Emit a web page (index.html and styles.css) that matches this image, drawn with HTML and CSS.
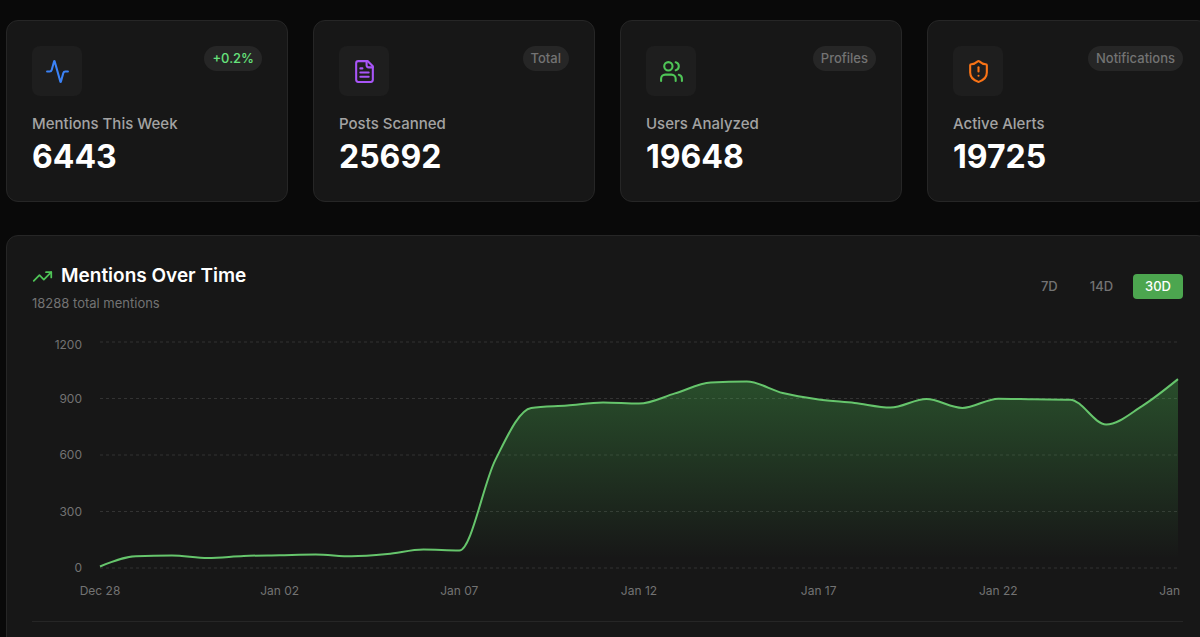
FILE: index.html
```
<!DOCTYPE html>
<html lang="en">
<head>
    <meta charset="UTF-8">
    <meta name="viewport" content="width=device-width, initial-scale=1.0">
    <title>Mentions Dashboard</title>
    <link rel="stylesheet" href="styles.css">
</head>
<body>
    <main class="dashboard">
        <section class="stats">
            <div class="stat-card">
                <div class="stat-top">
                    <div class="stat-icon blue">
                        <svg class="icon" viewBox="0 0 24 24"><path d="M22 12h-2.48a2 2 0 0 0-1.93 1.46l-2.35 8.36a.25.25 0 0 1-.48 0L9.24 2.18a.25.25 0 0 0-.48 0l-2.35 8.36A2 2 0 0 1 4.49 12H2"/></svg>
                    </div>
                    <span class="badge badge-up">+0.2%</span>
                </div>
                <div class="stat-label">Mentions This Week</div>
                <div class="stat-number">6443</div>
            </div>
            <div class="stat-card">
                <div class="stat-top">
                    <div class="stat-icon purple">
                        <svg class="icon" viewBox="0 0 24 24"><path d="M15 2H6a2 2 0 0 0-2 2v16a2 2 0 0 0 2 2h12a2 2 0 0 0 2-2V7Z"/><path d="M14 2v4a2 2 0 0 0 2 2h4"/><path d="M10 9H8"/><path d="M16 13H8"/><path d="M16 17H8"/></svg>
                    </div>
                    <span class="badge">Total</span>
                </div>
                <div class="stat-label">Posts Scanned</div>
                <div class="stat-number">25692</div>
            </div>
            <div class="stat-card">
                <div class="stat-top">
                    <div class="stat-icon green">
                        <svg class="icon" viewBox="0 0 24 24"><path d="M16 21v-2a4 4 0 0 0-4-4H6a4 4 0 0 0-4 4v2"/><circle cx="9" cy="7" r="4"/><path d="M22 21v-2a4 4 0 0 0-3-3.87"/><path d="M16 3.13a4 4 0 0 1 0 7.75"/></svg>
                    </div>
                    <span class="badge">Profiles</span>
                </div>
                <div class="stat-label">Users Analyzed</div>
                <div class="stat-number">19648</div>
            </div>
            <div class="stat-card">
                <div class="stat-top">
                    <div class="stat-icon orange">
                        <svg class="icon" viewBox="0 0 24 24"><path d="M20 13c0 5-3.5 7.5-7.66 8.95a1 1 0 0 1-.67-.01C7.5 20.5 4 18 4 13V6a1 1 0 0 1 1-1c2 0 4.5-1.2 6.24-2.72a1.17 1.17 0 0 1 1.52 0C14.51 3.81 17 5 19 5a1 1 0 0 1 1 1z"/><path d="M12 8v4"/><path d="M12 16h.01"/></svg>
                    </div>
                    <span class="badge">Notifications</span>
                </div>
                <div class="stat-label">Active Alerts</div>
                <div class="stat-number">19725</div>
            </div>
        </section>

        <section class="panel">
            <div class="panel-header">
                <div>
                    <h2 class="panel-title">
                        <svg class="icon title-icon" viewBox="0 0 24 24"><path d="M22 7 13.5 15.5 8.5 10.5 2 17"/><path d="M16 7h6v6"/></svg>
                        Mentions Over Time
                    </h2>
                    <p class="panel-subtitle">18288 total mentions</p>
                </div>
                <div class="ranges">
                    <button type="button" class="range-btn">7D</button>
                    <button type="button" class="range-btn">14D</button>
                    <button type="button" class="range-btn active">30D</button>
                </div>
            </div>
            <svg class="chart" id="chart" role="img" aria-label="Mentions over time"></svg>
            <div class="panel-footer"></div>
        </section>
    </main>

    <script>
        const mentions = [
            8, 62, 66, 53, 64, 68, 72, 62, 74, 98, 93, 573, 850, 863, 879, 873,
            927, 985, 990, 929, 895, 876, 852, 897, 850, 899, 896, 894, 762, 860, 1003
        ];
        const xLabels = { 0: 'Dec 28', 5: 'Jan 02', 10: 'Jan 07', 15: 'Jan 12', 20: 'Jan 17', 25: 'Jan 22', 30: 'Jan' };
        const maxValue = 1200;
        const margin = { top: 5, right: 5, bottom: 37, left: 68 };

        // Monotone cubic curve through the points
        function curve(points) {
            const n = points.length;
            const slopes = [];
            for (let i = 0; i < n - 1; i++) {
                slopes.push((points[i + 1].y - points[i].y) / (points[i + 1].x - points[i].x));
            }
            const tangents = points.map((p, i) => {
                if (i === 0 || i === n - 1) return 0;
                const a = slopes[i - 1];
                const b = slopes[i];
                return (Math.sign(a) + Math.sign(b)) * Math.min(Math.abs(a), Math.abs(b), Math.abs(a + b) / 4);
            });
            tangents[0] = (3 * slopes[0] - tangents[1]) / 2;
            tangents[n - 1] = (3 * slopes[n - 2] - tangents[n - 2]) / 2;

            let d = `M${points[0].x},${points[0].y}`;
            for (let i = 1; i < n; i++) {
                const p = points[i - 1];
                const q = points[i];
                const dx = (q.x - p.x) / 3;
                d += `C${p.x + dx},${p.y + dx * tangents[i - 1]},${q.x - dx},${q.y - dx * tangents[i]},${q.x},${q.y}`;
            }
            return d;
        }

        function drawChart() {
            const svg = document.getElementById('chart');
            const { width, height } = svg.getBoundingClientRect();
            const right = width - margin.right;
            const bottom = height - margin.bottom;
            const x = i => margin.left + i * (right - margin.left) / (mentions.length - 1);
            const y = v => bottom - v * (bottom - margin.top) / maxValue;
            const line = curve(mentions.map((v, i) => ({ x: x(i), y: y(v) })));

            const grid = [0, 300, 600, 900, 1200].map(v => `
                <line class="grid-line" x1="${margin.left}" x2="${right}" y1="${y(v)}" y2="${y(v)}"/>
                <text class="tick" text-anchor="end" x="${margin.left - 18}" y="${Math.max(y(v), 8) + 4}">${v}</text>
            `).join('');
            const dates = Object.entries(xLabels).map(([i, label]) => {
                const last = Number(i) === mentions.length - 1;
                return `<text class="tick" text-anchor="${last ? 'end' : 'middle'}" x="${x(i) + (last ? 2 : 0)}" y="${bottom + 27}">${label}</text>`;
            }).join('');

            svg.innerHTML = `
                <defs>
                    <linearGradient id="fill" x1="0" y1="0" x2="0" y2="1">
                        <stop offset="5%" stop-color="#4fc557" stop-opacity="0.3"/>
                        <stop offset="95%" stop-color="#4fc557" stop-opacity="0"/>
                    </linearGradient>
                </defs>
                ${grid}
                <path d="${line}L${right},${bottom}L${margin.left},${bottom}Z" fill="url(#fill)"/>
                <path class="line" d="${line}"/>
                ${dates}
            `;
        }

        drawChart();
        window.addEventListener('resize', drawChart);
    </script>
</body>
</html>
```
FILE: styles.css
```
* {
    box-sizing: border-box;
}
body {
    font-family: Inter, 'Liberation Sans', sans-serif;
    margin: 0;
    background-color: #090909;
    color: white;
    overflow: hidden;
}
/* the content runs slightly past the right edge */
.dashboard {
    margin: 20px -9px 0 6px;
}
.icon {
    width: 25px;
    height: 25px;
    fill: none;
    stroke: currentColor;
    stroke-width: 2;
    stroke-linecap: round;
    stroke-linejoin: round;
}

.stats {
    display: grid;
    grid-template-columns: repeat(4, 1fr);
    gap: 25px;
    margin-bottom: 33px;
}
.stat-card {
    background: #171717;
    border: 1px solid #262626;
    border-radius: 12px;
    padding: 25px;
}
.stat-top {
    display: flex;
    justify-content: space-between;
    align-items: flex-start;
    margin-bottom: 16px;
}
.stat-icon {
    display: flex;
    align-items: center;
    justify-content: center;
    width: 50px;
    height: 50px;
    border-radius: 8px;
    background: #1e1e1e;
}
.blue { color: #3b82f6; }
.purple { color: #a855f7; }
.green { color: #4fc557; }
.orange { color: #f97316; }

.badge {
    padding: 4px 8px;
    border-radius: 13px;
    background: #262626;
    color: #737373;
    font-size: 13px;
    font-weight: 500;
    line-height: 17px;
}
.badge-up {
    color: #66e27c;
}
.stat-label {
    color: #a3a3a3;
    font-size: 15px;
    font-weight: 500;
    line-height: 24px;
    margin-bottom: 2px;
}
.stat-number {
    font-size: 32px;
    font-weight: 700;
    line-height: 38px;
}

.panel {
    background: #171717;
    border: 1px solid #262626;
    border-radius: 12px;
    padding: 25px;
}
.panel-header {
    display: flex;
    justify-content: space-between;
    align-items: center;
    margin-bottom: 25px;
}
.panel-title {
    display: flex;
    align-items: center;
    gap: 8px;
    margin: 0 0 3px;
    font-size: 19px;
    font-weight: 600;
    line-height: 30px;
}
.title-icon {
    width: 21px;
    height: 21px;
    color: #4fc557;
}
.panel-subtitle {
    margin: 0;
    color: #737373;
    font-size: 13px;
    line-height: 18px;
}
.ranges {
    display: flex;
    gap: 8px;
}
.range-btn {
    padding: 4px 12px;
    border: none;
    border-radius: 4px;
    background: none;
    color: #737373;
    font-family: inherit;
    font-size: 13px;
    font-weight: 500;
    line-height: 17px;
    cursor: pointer;
}
.range-btn.active {
    background: #4ca64f;
    color: white;
}

.chart {
    display: block;
    width: 100%;
    height: 268px;
}
.grid-line {
    stroke: #333333;
    stroke-dasharray: 3 3;
}
.tick {
    fill: #737373;
    font-size: 12px;
}
.line {
    fill: none;
    stroke: #66c56c;
    stroke-width: 2;
}
.panel-footer {
    margin-top: 16px;
    height: 24px;
    border-top: 1px solid #262626;
}
```
